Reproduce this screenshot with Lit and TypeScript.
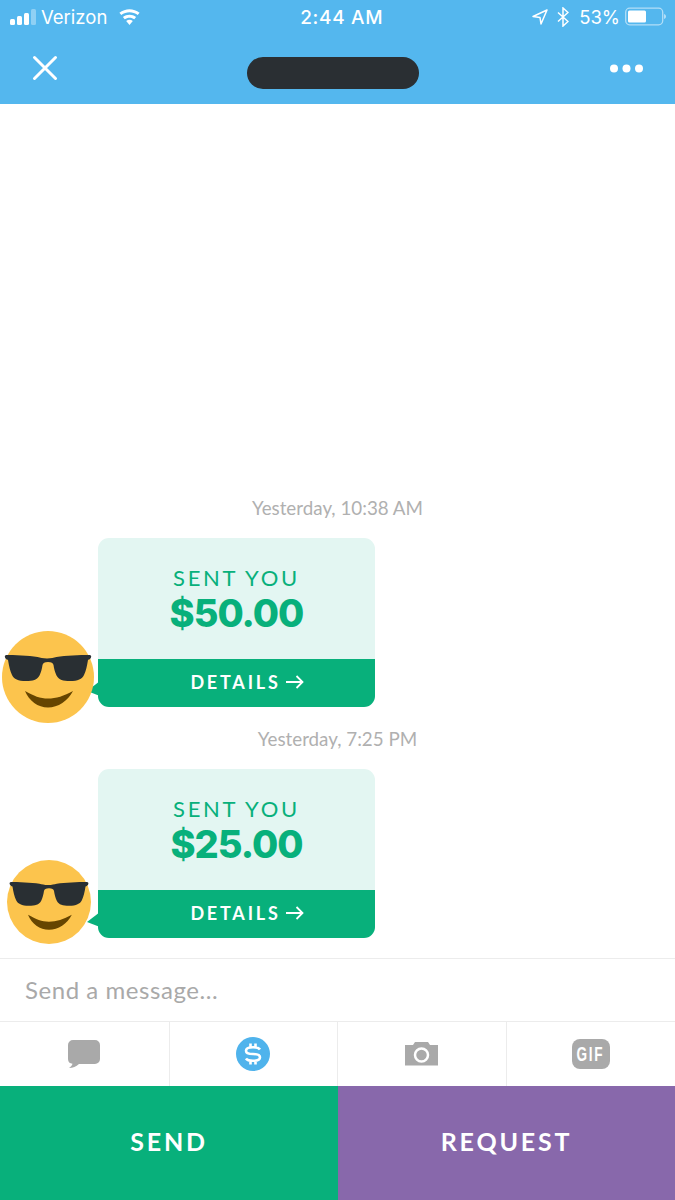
import { LitElement, css, html, svg } from "lit";
import { customElement } from "lit/decorators.js";

const smiley = (size: number) => html`
  <svg class="avatar-svg" width=${size} height=${size} viewBox="0 0 92 92">
    <circle cx="46" cy="46" r="46" fill="#fcc44d"></circle>
    ${svg`<path d="M4.500 24c-1.500 0-2 1-1.500 2.500.5 1.500 2 2 3 2.500 1 6 2 11 4 15 2 4 6 6 14 6 7 0 11-1 13.500-5.500 1.500-3 2.500-7 3-10.500 .5-2 2-3 5.500-3s5 1 5.500 3c.5 3.500 1.500 7.500 3 10.500 2.500 4.500 6.500 5.500 13.500 5.500 8 0 12-2 14-6 2-4 3-9 4-15 1-.5 2.500-1 3-2.500.5-1.500 0-2.500-1.500-2.500-10 0-24 .5-33 2-3 .5-5 1.500-9.500 1.500s-6.500-1-9.500-1.500c-9-1.500-23-2-32.500-2z" fill="#292f33"></path>
    <path d="M23 60C32 65 38 67.500 46 67.500S62 65 71 60C66 70 56 76.500 46 76.500S27 70 23 60z" fill="#664500"></path>`}
  </svg>
`;

@customElement("app-root")
export class AppRoot extends LitElement {
  static styles = css`
    :host {
      display: block;
      width: 675px;
      height: 1200px;
      background: #fff;
      font-family: "Lato", "Liberation Sans", sans-serif;
    }
    .page {
      display: flex;
      flex-direction: column;
      height: 1200px;
    }
    .top {
      background: #54b7ee;
      height: 104px;
      flex: none;
      color: #fff;
    }
    .status {
      height: 34px;
      display: flex;
      align-items: center;
      padding: 0 8px 0 10px;
      font-family: "Inter", "Liberation Sans", sans-serif;
      font-size: 18.5px;
    }
    .status .left,
    .status .right {
      display: flex;
      align-items: center;
    }
    .carrier {
      margin-left: 5px;
      margin-right: 11px;
    }
    .clock {
      flex: 1;
      text-align: center;
      font-size: 19px;
      font-weight: 500;
      letter-spacing: 0.7px;
      padding-left: 10px;
    }
    .bt {
      margin-left: 9px;
    }
    .pct {
      margin: 0 5px 0 10px;
    }
    .nav {
      height: 70px;
      box-sizing: border-box;
      display: flex;
      align-items: center;
      justify-content: space-between;
      padding: 0 32px 2px 32px;
    }
    .redacted {
      width: 172px;
      height: 32px;
      border-radius: 16px;
      background: #2a2f33;
      margin: 10px 2px 0 0;
    }
    .chat {
      flex: 1;
      display: flex;
      flex-direction: column;
      justify-content: flex-end;
      padding-bottom: 20px;
    }
    .time {
      height: 20px;
      line-height: 20px;
      text-align: center;
      color: #b0b0b0;
      font-size: 18.8px;
      margin-bottom: 20px;
    }
    .time.second {
      margin-top: 22px;
    }
    .msg {
      position: relative;
      margin-left: 98px;
      width: 277px;
    }
    .card {
      border-radius: 11px;
      overflow: hidden;
    }
    .body {
      height: 121px;
      background: #e3f6f2;
      color: #08b07b;
      text-align: center;
      box-sizing: border-box;
      padding-top: 28px;
    }
    .label {
      font-size: 22px;
      line-height: 24px;
      letter-spacing: 2.7px;
    }
    .amount {
      font-family: "Inter", "Liberation Sans", sans-serif;
      font-size: 38px;
      line-height: 44px;
      font-weight: 800;
      letter-spacing: -1px;
      margin-top: 1px;
    }
    .details {
      height: 48px;
      background: #08b07b;
      color: #fff;
      display: flex;
      align-items: center;
      justify-content: center;
      gap: 5px;
      font-size: 18px;
      font-weight: 700;
      letter-spacing: 2.8px;
      padding: 0 0 2px 21px;
      box-sizing: border-box;
    }
    .tail {
      position: absolute;
      left: -12px;
      bottom: 10px;
    }
    .avatar {
      position: absolute;
      line-height: 0;
    }
    .avatar.a {
      left: -96px;
      bottom: -16px;
    }
    .avatar.b {
      left: -91px;
      bottom: -6px;
    }
    .input {
      flex: none;
      border-top: 1px solid #ececec;
      border-bottom: 1px solid #ececec;
      box-sizing: border-box;
      height: 64px;
      display: flex;
      align-items: center;
      padding: 0 0 2px 25px;
      font-size: 24px;
      color: #a9a9a9;
      letter-spacing: 0.55px;
    }
    .tabs {
      height: 64px;
      flex: none;
      display: grid;
      grid-template-columns: 169px 168px 169px 169px;
    }
    .tab {
      display: flex;
      align-items: center;
      justify-content: center;
      border-left: 1px solid #ececec;
      padding-right: 1px;
    }
    .tab:first-child {
      border-left: none;
    }
    .gif {
      width: 38px;
      height: 30px;
      border-radius: 8px;
      background: #a9a9a9;
      color: #fff;
      font-family: "Liberation Sans", sans-serif;
      font-weight: 700;
      font-size: 20px;
      display: flex;
      align-items: center;
      justify-content: center;
    }
    .gif span {
      transform: scaleX(0.68);
      letter-spacing: 2.5px;
    }
    .actions {
      height: 114px;
      flex: none;
      display: grid;
      grid-template-columns: 338px 337px;
    }
    .btn {
      display: flex;
      align-items: center;
      justify-content: center;
      color: #fff;
      font-size: 25px;
      font-weight: 700;
      letter-spacing: 2.8px;
      padding-bottom: 4px;
      box-sizing: border-box;
    }
    .send {
      background: #08b07b;
    }
    .request {
      background: #8868ab;
    }
  `;

  renderMessage(amount: string, avatarClass: string, size: number) {
    return html`
      <div class="msg">
        <svg class="tail" width="14" height="22" viewBox="0 0 14 22">
          <path d="M14 6L1 16L14 21z" fill="#08b07b"></path>
        </svg>
        <div class="card">
          <div class="body">
            <div class="label">SENT YOU</div>
            <div class="amount">${amount}</div>
          </div>
          <div class="details">
            DETAILS
            <svg width="18" height="14" viewBox="0 0 18 14" fill="none" stroke="#fff" stroke-width="1.8">
              <path d="M0 7h16M10.500 1l6 6-6 6"></path>
            </svg>
          </div>
        </div>
        <div class="avatar ${avatarClass}">${smiley(size)}</div>
      </div>
    `;
  }

  render() {
    return html`
      <div class="page">
        <div class="top">
          <div class="status">
            <div class="left">
              <svg width="26" height="16" viewBox="0 0 26 16" fill="#fff">
                <rect x="0" y="10" width="5" height="6" rx="1.500"></rect>
                <rect x="7" y="7" width="5" height="9" rx="1.500"></rect>
                <rect x="14" y="4" width="5" height="12" rx="1.500"></rect>
                <rect x="21" y="0" width="5" height="16" rx="1.500" opacity="0.35"></rect>
              </svg>
              <span class="carrier">Verizon</span>
              <svg width="23" height="16" viewBox="0 0 23 16" fill="#fff">
                <path d="M11.500 16l3.300-4.100c-2-1.500-4.600-1.500-6.600 0z"></path>
                <path d="M6.700 10.200c2.800-2.100 7-2.100 9.600 0l1.800-2.200c-3.900-3-9.300-3-13.200 0z"></path>
                <path d="M3.300 6c4.800-3.700 11.600-3.700 16.400 0l1.900-2.300C15.700-1 7.300-1 1.400 3.700z"></path>
              </svg>
            </div>
            <div class="clock">2:44 AM</div>
            <div class="right">
              <svg width="16" height="16" viewBox="0 0 16 16" fill="none" stroke="#fff" stroke-width="1.500">
                <path d="M15 1L1 7.500L8 8.500L9 15z" stroke-linejoin="round"></path>
              </svg>
              <svg class="bt" width="12" height="20" viewBox="0 0 12 20" fill="none" stroke="#fff" stroke-width="1.500">
                <path d="M1 5.500l10 9-5 4.500V1l5 4.500-10 9"></path>
              </svg>
              <span class="pct">53%</span>
              <svg width="42" height="20" viewBox="0 0 42 20">
                <rect x="0.700" y="1.200" width="37" height="16.600" rx="4" fill="none" stroke="#fff" stroke-opacity="0.55" stroke-width="1.300"></rect>
                <rect x="3" y="3.500" width="18" height="12" rx="1.500" fill="#fff"></rect>
                <path d="M39 7c1.500 .4 2 1.300 2 2.500s-.5 2.100-2 2.500z" fill="#fff" opacity="0.55"></path>
              </svg>
            </div>
          </div>
          <div class="nav">
            <svg width="26" height="26" viewBox="0 0 26 26" stroke="#fff" stroke-width="3" stroke-linecap="round">
              <path d="M2.500 2.500l21 21M23.500 2.500l-21 21"></path>
            </svg>
            <div class="redacted"></div>
            <svg width="33" height="9" viewBox="0 0 33 9" fill="#fff">
              <circle cx="4" cy="4.500" r="4"></circle>
              <circle cx="16.500" cy="4.500" r="4"></circle>
              <circle cx="29" cy="4.500" r="4"></circle>
            </svg>
          </div>
        </div>
        <div class="chat">
          <div class="time">Yesterday, 10:38 AM</div>
          ${this.renderMessage("$50.00", "a", 92)}
          <div class="time second">Yesterday, 7:25 PM</div>
          ${this.renderMessage("$25.00", "b", 84)}
        </div>
        <div class="input">Send a message...</div>
        <div class="tabs">
          <div class="tab">
            <svg width="34" height="30" viewBox="0 0 34 30">
              <path d="M6 1h22a5 5 0 0 1 5 5v14a5 5 0 0 1-5 5H12c-3 2.500-6 4-10 4 2-1.500 3-2.500 3.500-4.200A5 5 0 0 1 1 20V6a5 5 0 0 1 5-5z" fill="#a9a9a9"></path>
            </svg>
          </div>
          <div class="tab">
            <svg width="34" height="34" viewBox="0 0 34 34">
              <circle cx="17" cy="17" r="17" fill="#4fb3ec"></circle>
              <path d="M24 12.500c-1-1.500-3.500-2.300-7-2.300-4 0-7 1-7 3.500s3 3.300 7 3.300 7 .8 7 3.300-3 3.500-7 3.500c-3.500 0-6-.8-7-2.300M14.500 10V6.500M19.500 10V6.500M14.500 27.500V24M19.500 27.500V24" fill="none" stroke="#fff" stroke-width="2.600"></path>
            </svg>
          </div>
          <div class="tab">
            <svg width="33" height="24" viewBox="0 0 33 24">
              <path d="M0 3h8l2-3h13l2 3h8v20.500H0z" fill="#a9a9a9"></path>
              <circle cx="16.500" cy="13" r="6.500" fill="#a9a9a9" stroke="#fff" stroke-width="2.500"></circle>
            </svg>
          </div>
          <div class="tab"><div class="gif"><span>GIF</span></div></div>
        </div>
        <div class="actions">
          <div class="btn send">SEND</div>
          <div class="btn request">REQUEST</div>
        </div>
      </div>
    `;
  }
}
